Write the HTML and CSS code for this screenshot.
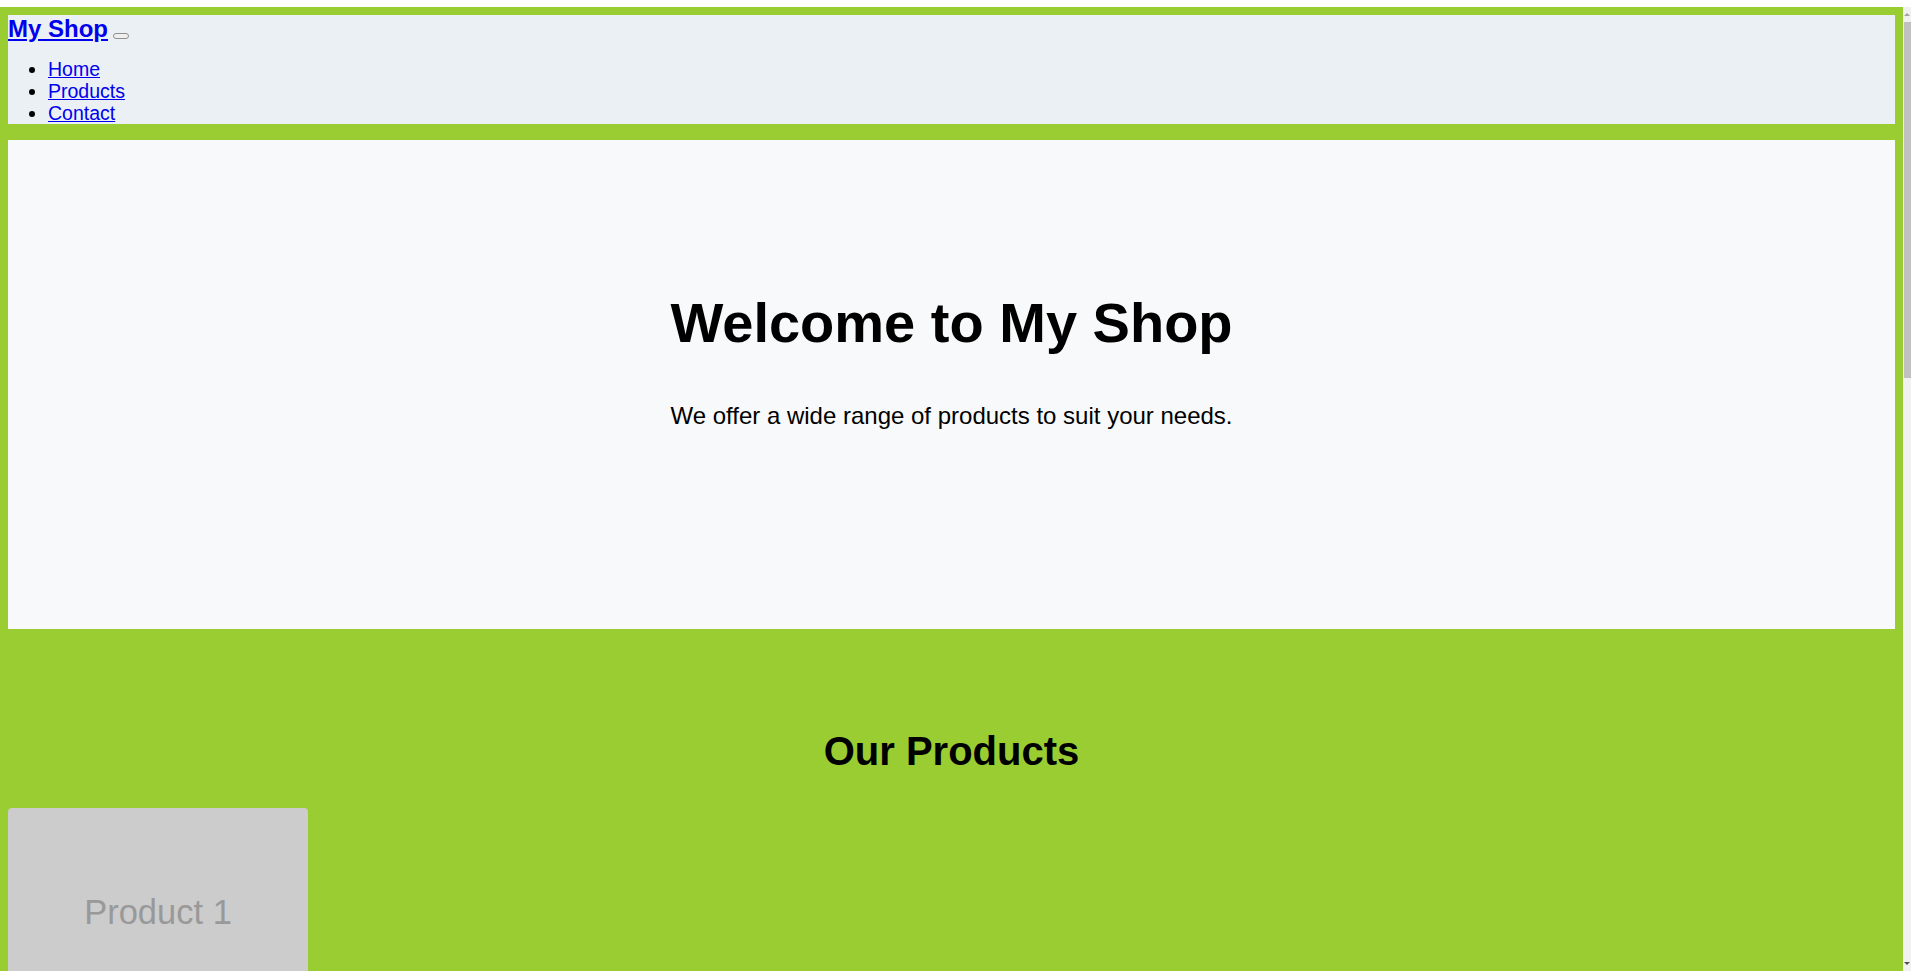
FILE: index.html
```html
<!DOCTYPE html>
<html lang="en">
<head>
<meta charset="utf-8">
<title>My Shop</title>
<link rel="stylesheet" href="styles.css">
</head>
<body>
<header class="site-header">
  <div class="brand-row"><a class="brand" href="#">My Shop</a> <button class="menu-toggle" type="button"></button></div>
  <ul class="nav-list">
    <li><a href="#">Home</a></li>
    <li><a href="#">Products</a></li>
    <li><a href="#">Contact</a></li>
  </ul>
</header>

<section class="hero">
  <h1 class="hero-title">Welcome to My Shop</h1>
  <p class="hero-text">We offer a wide range of products to suit your needs.</p>
</section>

<section class="products">
  <h2 class="products-title">Our Products</h2>
  <div class="product-list">
    <div class="product-card"><div class="product-image">Product 1</div></div>
    <div class="product-card"><div class="product-image">Product 2</div></div>
    <div class="product-card"><div class="product-image">Product 3</div></div>
    <div class="product-card"><div class="product-image">Product 4</div></div>
    <div class="product-card"><div class="product-image">Product 5</div></div>
    <div class="product-card"><div class="product-image">Product 6</div></div>
    <div class="product-card"><div class="product-image">Product 7</div></div>
  </div>
</section>

<div class="fake-scrollbar" aria-hidden="true">
  <div class="fake-scrollbar-arrow fake-scrollbar-arrow-up"></div>
  <div class="fake-scrollbar-thumb"></div>
  <div class="fake-scrollbar-arrow fake-scrollbar-arrow-down"></div>
</div>
</body>
</html>
```

FILE: styles.css
```css
html {
  background: #ffffff;
}

body {
  margin: 7px 8px 0 0;
  padding: 8px;
  background: #9acd32;
  font-family: "Liberation Sans", Arial, sans-serif;
  font-size: 19.5px;
  color: #000;
}

a {
  color: #0000ee;
}

.site-header {
  background: #eaf0f4;
}

.brand-row {
  line-height: normal;
}

.brand {
  font-size: 24px;
  font-weight: bold;
}

.menu-toggle {
  padding: 1px 6px;
  border: 1px solid #8f8f8f;
  border-radius: 3px;
  background: #efefef;
  width: 16px;
  height: 6px;
  vertical-align: baseline;
}

.nav-list {
  margin: 15px 0 3.5px;
  padding-left: 40px;
  line-height: 22px;
}

.hero {
  margin-top: 16px;
  height: 489px;
  box-sizing: border-box;
  padding-top: 150px;
  background: #f8f9fa;
  text-align: center;
}

.hero-title {
  margin: 0 0 47px;
  font-size: 56px;
  font-weight: bold;
  line-height: normal;
}

.hero-text {
  margin: 0;
  font-size: 24px;
  line-height: normal;
}

.products {
  padding-top: 100px;
}

.products-title {
  margin: 0 0 34px;
  font-size: 40px;
  font-weight: bold;
  text-align: center;
  line-height: normal;
}

.product-list {
  display: flex;
  flex-direction: column;
  gap: 20px;
}

.product-card {
  width: 300px;
  border-radius: 4px;
  overflow: hidden;
  background: #cccccc;
}

.product-image {
  height: 208px;
  display: flex;
  align-items: center;
  justify-content: center;
  color: #999999;
  font-size: 34.5px;
}

/* visual stand-in for the browser scrollbar shown in the screenshot */
.fake-scrollbar {
  position: fixed;
  top: 7px;
  right: 0;
  bottom: 0;
  width: 8px;
  background: #f1f1f1;
  display: flex;
  flex-direction: column;
}

.fake-scrollbar-arrow {
  height: 15px;
  display: flex;
  align-items: center;
  justify-content: center;
}

.fake-scrollbar-arrow-up::before {
  content: "";
  border-left: 3px solid transparent;
  border-right: 3px solid transparent;
  border-bottom: 3px solid #a3a3a3;
}

.fake-scrollbar-arrow-down {
  margin-top: auto;
}

.fake-scrollbar-arrow-down::before {
  content: "";
  border-left: 3px solid transparent;
  border-right: 3px solid transparent;
  border-top: 3px solid #505050;
}

.fake-scrollbar-thumb {
  margin-left: 1px;
  height: 356px;
  background: #c1c1c1;
}
```
